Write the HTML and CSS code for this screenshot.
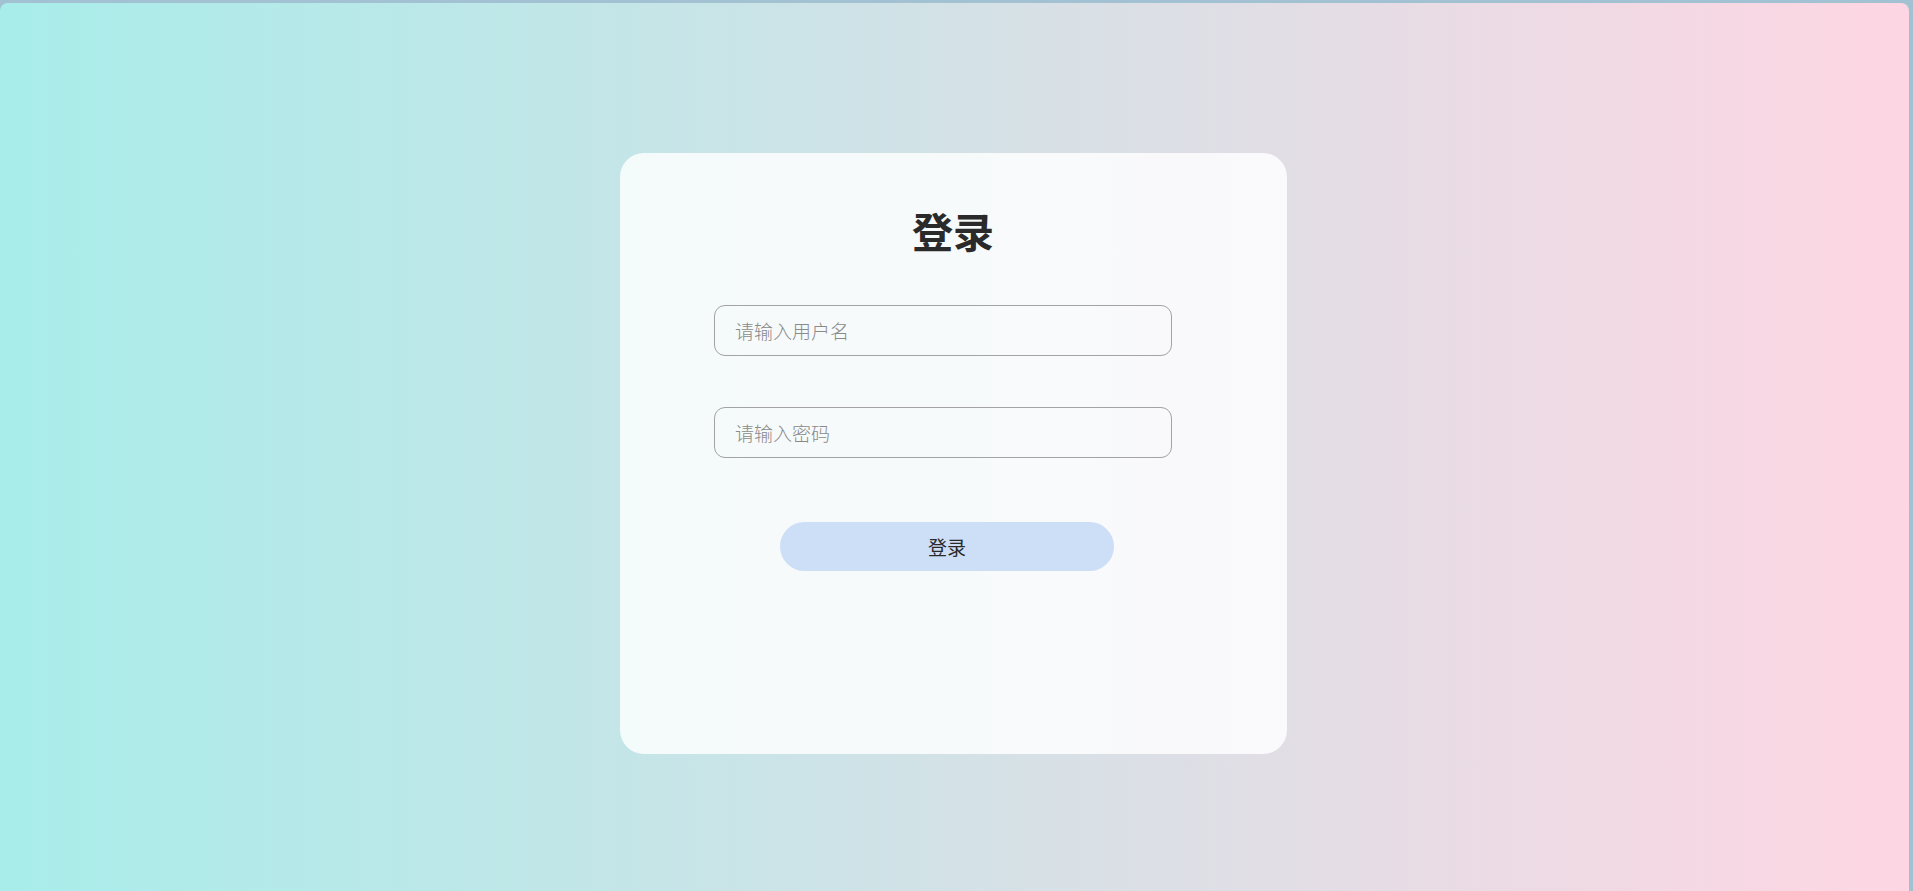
FILE: index.html
```html
<!DOCTYPE html>
<html lang="zh-CN">
<head>
<meta charset="utf-8">
<title>登录</title>
<link rel="stylesheet" href="styles.css">
</head>
<body>
<div class="frame">
  <div class="card">
    <h1 class="title">登录</h1>
    <form class="form">
      <input class="field" type="text" placeholder="请输入用户名">
      <input class="field" type="password" placeholder="请输入密码">
      <button class="btn" type="button">登录</button>
    </form>
  </div>
</div>
</body>
</html>
```

FILE: styles.css
```css
html, body {
  margin: 0;
  padding: 0;
  height: 100%;
  overflow: hidden;
}
body {
  background: #a2c2d4;
  font-family: "Noto Sans CJK SC", "Noto Sans", sans-serif;
}
.frame {
  margin: 3px 4px 0 0;
  height: 888px;
  border-radius: 8px 8px 0 0;
  background: linear-gradient(to right, #a8edea, #fed6e3);
  display: flex;
  justify-content: center;
  align-items: flex-start;
  padding-top: 150px;
  padding-right: 2px;
  box-sizing: border-box;
}
.card {
  width: 667px;
  height: 601px;
  box-sizing: border-box;
  padding: 53px 115px 0 94px;
  background: rgba(255, 255, 255, 0.82);
  border-radius: 24px;
  display: flex;
  flex-direction: column;
}
.title {
  margin: 0 0 51px 0;
  font-size: 41px;
  line-height: 48px;
  font-weight: 700;
  color: #2a2a2a;
  text-align: center;
  padding-left: 20px;
}
.form {
  display: flex;
  flex-direction: column;
  margin: 0;
}
.field {
  width: 458px;
  height: 51px;
  box-sizing: border-box;
  border: 1px solid #a3a3a3;
  border-radius: 11px;
  background: transparent;
  padding: 0 20px;
  font-family: "Noto Sans CJK SC", "Noto Sans", sans-serif;
  font-size: 19px;
  font-weight: 300;
  color: #333;
  outline: none;
  margin: 0 0 51px 0;
}
.field + .field {
  margin-bottom: 64px;
}
.field::placeholder {
  color: #8a8a8a;
}
.btn {
  width: 334px;
  height: 49px;
  margin-left: 66px;
  border: none;
  border-radius: 25px;
  background: #cddff7;
  font-family: "Noto Sans CJK SC", "Noto Sans", sans-serif;
  font-size: 19px;
  font-weight: 400;
  color: #2a2a2a;
  cursor: pointer;
}
```
